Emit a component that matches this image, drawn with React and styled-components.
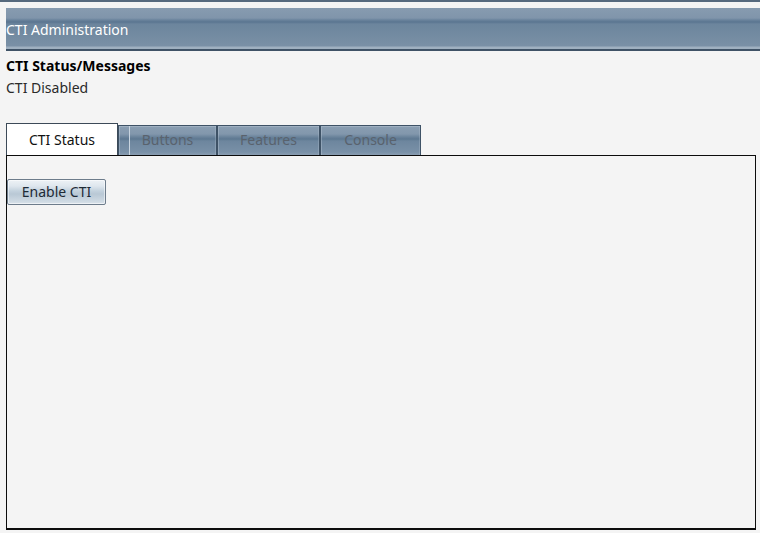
import React from "react";
import styled, { createGlobalStyle } from "styled-components";

const Global = createGlobalStyle`
  html, body { margin: 0; padding: 0; background: #f4f4f4; }
  body { font-family: "Noto Sans", "Open Sans", "Liberation Sans", sans-serif; font-size: 14px; color: #1a1a1a; }
  * { box-sizing: border-box; }
`;

const Page = styled.div`
  width: 760px;
  height: 533px;
  display: flex;
  flex-direction: column;
  overflow: hidden;
`;

const TopRule = styled.div`
  height: 2px;
  background: #56697d;
  flex: none;
`;

const Header = styled.div`
  margin: 6px 0 0 6px;
  height: 43px;
  flex: none;
  display: flex;
  align-items: center;
  padding: 2px 0 0 0;
  color: #ffffff;
  font-size: 14px;
  border-bottom: 2px solid #3f5266;
  background: linear-gradient(
    to bottom,
    #879bb0 0px,
    #8095ab 10px,
    #6a839c 12px,
    #5a7590 14px,
    #6c859d 16px,
    #7189a0 24px,
    #7a90a6 38px,
    #9fb0c0 39px,
    #9fb0c0 41px
  );
`;

const Section = styled.div`
  padding: 6px 6px 0 6px;
  display: flex;
  flex-direction: column;
  gap: 5px;
`;

const Title = styled.div`
  font-weight: bold;
  font-size: 14px;
  line-height: 17px;
  color: #000;
`;

const Status = styled.div`
  font-size: 14px;
  line-height: 17px;
  color: #2a2a2a;
`;

const TabRow = styled.div`
  margin: 27px 0 0 6px;
  display: flex;
  align-items: flex-end;
  height: 32px;
  flex: none;
`;

const Tab = styled.div`
  position: relative;
  width: ${(p) => p.$w}px;
  height: ${(p) => (p.$active ? 32 : 30)}px;
  display: flex;
  align-items: center;
  justify-content: center;
  padding-bottom: ${(p) => (p.$active ? 0 : 2)}px;
  font-size: 14px;
  color: ${(p) => (p.$active ? "#111" : "#59626d")};
  background: ${(p) =>
    p.$active
      ? "#ffffff"
      : `linear-gradient(to bottom, #8a9eb2 0px, #8297ac 8px, #6a839b 11px, #5d7891 13px, #6d869e 15px, #7990a7 26px, #8ea1b4 30px)`};
  border: 1px solid ${(p) => (p.$active ? "#3c4a58" : "#3e5266")};
  border-bottom: none;
  box-shadow: ${(p) =>
    p.$active ? "none" : "inset 1px 1px 0 rgba(200,212,224,0.35), inset -1px 0 0 rgba(200,212,224,0.25)"};
  ${(p) =>
    p.$mark &&
    `&::before {
      content: "";
      position: absolute;
      left: 10px;
      top: 0;
      bottom: 0;
      width: 1px;
      background: #c9d5e0;
    }`}
`;

const Panel = styled.div`
  margin: 0 4px 0 6px;
  height: 375px;
  flex: none;
  border: 1px solid #0c0c0c;
  border-width: 1px 1px 2px 1px;
  padding: 23px 0 0 0;
  background: #f4f4f4;
`;

const Button = styled.button`
  margin: 0;
  width: 99px;
  height: 26px;
  border: 1px solid #6d7c8b;
  border-radius: 2px;
  font-family: inherit;
  font-size: 14px;
  color: #1e2a36;
  padding: 0 0 1px 0;
  background: linear-gradient(
    to bottom,
    #eef2f6 0px,
    #dfe7ee 6px,
    #c3d1dd 11px,
    #b9c8d5 14px,
    #d0dbe4 22px,
    #dde5ec 24px
  );
  box-shadow: inset 0 0 0 1px rgba(255, 255, 255, 0.5);
`;

const tabs = [
  { label: "CTI Status", w: 112, active: true },
  { label: "Buttons", w: 99, mark: true },
  { label: "Features", w: 103 },
  { label: "Console", w: 101 },
];

export default function App() {
  return (
    <>
      <Global />
      <Page>
        <TopRule />
        <Header>CTI Administration</Header>
        <Section>
          <Title>CTI Status/Messages</Title>
          <Status>CTI Disabled</Status>
        </Section>
        <TabRow>
          {tabs.map((t) => (
            <Tab key={t.label} $w={t.w} $active={t.active} $mark={t.mark}>
              {t.label}
            </Tab>
          ))}
        </TabRow>
        <Panel>
          <Button>Enable CTI</Button>
        </Panel>
      </Page>
    </>
  );
}
